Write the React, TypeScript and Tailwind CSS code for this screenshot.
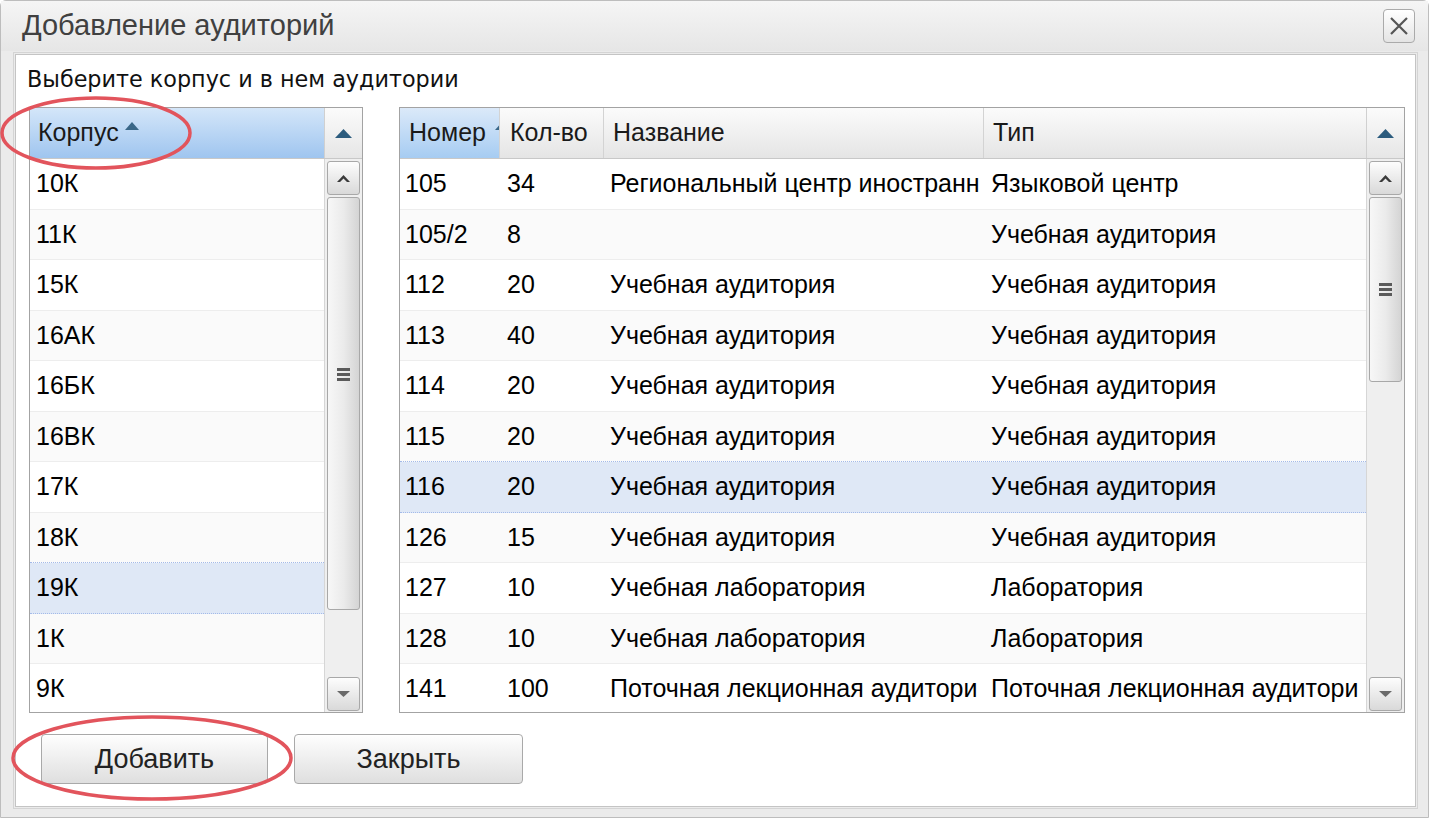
import React from 'react';

const buildings = ['10К', '11К', '15К', '16АК', '16БК', '16ВК', '17К', '18К', '19К', '1К', '9К'];

const rooms: [string, string, string, string][] = [
  ['105', '34', 'Региональный центр иностранн', 'Языковой центр'],
  ['105/2', '8', '', 'Учебная аудитория'],
  ['112', '20', 'Учебная аудитория', 'Учебная аудитория'],
  ['113', '40', 'Учебная аудитория', 'Учебная аудитория'],
  ['114', '20', 'Учебная аудитория', 'Учебная аудитория'],
  ['115', '20', 'Учебная аудитория', 'Учебная аудитория'],
  ['116', '20', 'Учебная аудитория', 'Учебная аудитория'],
  ['126', '15', 'Учебная аудитория', 'Учебная аудитория'],
  ['127', '10', 'Учебная лаборатория', 'Лаборатория'],
  ['128', '10', 'Учебная лаборатория', 'Лаборатория'],
  ['141', '100', 'Поточная лекционная аудитори', 'Поточная лекционная аудитори'],
];

const SELECTED_BUILDING = 8;
const SELECTED_ROOM = 6;

function rowClass(i: number, sel: number) {
  if (i === sel) return 'bg-[#dfe8f6] border-b border-dotted border-[#a3bae9]';
  const stripe = i % 2 === 1 ? 'bg-[#fafafa]' : 'bg-white';
  if (i === sel - 1) return `${stripe} border-b border-dotted border-[#a3bae9]`;
  return `${stripe} border-b border-[#ededed]`;
}

function SortArrow({ className }: { className: string }) {
  return (
    <svg width="14" height="8" viewBox="0 0 14 8" className={className}>
      <polygon points="0,8 7,0 14,8" fill="#3a6788" />
    </svg>
  );
}

function ScrollHeader() {
  return (
    <div className="w-[38px] h-full border-l border-[#d0d0d0] bg-linear-to-b from-[#fbfbfb] to-[#e6e6e6] flex items-center justify-center">
      <svg width="17" height="9" viewBox="0 0 17 9">
        <polygon points="0,9 8.5,0 17,9" fill="#2c5c7e" />
      </svg>
    </div>
  );
}

function ScrollBtn({ dir }: { dir: 'up' | 'down' }) {
  return (
    <div className="w-[33px] h-[34px] shrink-0 rounded-[3px] border border-[#a8a8a8] bg-linear-to-b from-[#fdfdfd] to-[#d9d9d9] flex items-center justify-center">
      <svg width="13" height="7" viewBox="0 0 13 7">
        {dir === 'up' ? (
          <polygon points="0,7 6.5,0 13,7 10,7 6.5,3.5 3,7" fill="#3a3a3a" />
        ) : (
          <polygon points="0,0 13,0 6.5,6" fill="#6a6a6a" />
        )}
      </svg>
    </div>
  );
}

function ScrollBar({ thumb, grip }: { thumb: string; grip: string }) {
  return (
    <div className="w-[38px] border-l border-[#d6d6d6] bg-[#efefef] flex flex-col items-center pt-[2px] pb-[1px]">
      <ScrollBtn dir="up" />
      <div
        className={`mt-[2px] w-[33px] shrink-0 rounded-[3px] border border-[#a8a8a8] bg-linear-to-r from-[#f7f7f7] via-[#ebebeb] to-[#d4d4d4] flex flex-col items-center ${thumb} ${grip}`}
      >
        <div className="flex flex-col gap-[2px]">
          <div className="w-[13px] h-[3px] bg-[#5a5a5a]" />
          <div className="w-[13px] h-[3px] bg-[#5a5a5a]" />
          <div className="w-[13px] h-[3px] bg-[#5a5a5a]" />
        </div>
      </div>
      <div className="flex-1" />
      <ScrollBtn dir="down" />
    </div>
  );
}

function BuildingGrid() {
  return (
    <div className="w-[334px] h-[606px] border border-[#a3a3a3] bg-white flex flex-col">
      <div className="h-[51px] shrink-0 flex border-b border-[#c8c8c8]">
        <div className="flex-1 bg-linear-to-b from-[#d4e6f9] to-[#9fc5ef] flex items-center pl-[8px] text-[25px] text-[#1a1a1a]">
          <span>Корпус</span>
          <SortArrow className="ml-[6px] -mt-[14px]" />
        </div>
        <ScrollHeader />
      </div>
      <div className="flex-1 flex min-h-0">
        <div className="flex-1 overflow-hidden">
          {buildings.map((b, i) => (
            <div key={b} className={`h-[50.5px] flex items-center pl-[6px] text-[25px] text-black ${rowClass(i, SELECTED_BUILDING)}`}>
              {b}
            </div>
          ))}
        </div>
        <ScrollBar thumb="h-[413px]" grip="pt-[170px]" />
      </div>
    </div>
  );
}

function RoomGrid() {
  const head = 'flex items-center overflow-hidden whitespace-nowrap border-r border-[#d3d3d3] text-[25px] text-[#1a1a1a]';
  const cell = 'flex items-center overflow-hidden whitespace-nowrap';
  return (
    <div className="w-[1006px] h-[606px] border border-[#a3a3a3] bg-white flex flex-col">
      <div className="h-[51px] shrink-0 flex border-b border-[#c8c8c8]">
        <div className="flex-1 grid grid-cols-[100px_104px_380px_1fr] bg-linear-to-b from-[#fbfbfb] to-[#e5e5e5]">
          <div className={`${head} pl-[9px] bg-linear-to-b from-[#dbe9f9] to-[#a6ccf2]`}>
            <span>Номер</span>
            <SortArrow className="ml-[9px] -mt-[14px] shrink-0" />
          </div>
          <div className={`${head} pl-[10px]`}>Кол-во</div>
          <div className={`${head} pl-[9px]`}>Название</div>
          <div className={`${head} pl-[9px] border-r-0`}>Тип</div>
        </div>
        <ScrollHeader />
      </div>
      <div className="flex-1 flex min-h-0">
        <div className="flex-1 overflow-hidden">
          {rooms.map((r, i) => (
            <div
              key={r[0]}
              className={`h-[50.5px] grid grid-cols-[100px_104px_380px_1fr] text-[25px] text-black ${rowClass(i, SELECTED_ROOM)}`}
            >
              <div className={`${cell} pl-[5px]`}>{r[0]}</div>
              <div className={`${cell} pl-[7px]`}>{r[1]}</div>
              <div className={`${cell} pl-[6px]`}>{r[2]}</div>
              <div className={`${cell} pl-[7px]`}>{r[3]}</div>
            </div>
          ))}
        </div>
        <ScrollBar thumb="h-[185px]" grip="justify-center" />
      </div>
    </div>
  );
}

function Button({ label, width }: { label: string; width: string }) {
  return (
    <button
      type="button"
      className={`h-[50px] ${width} rounded-[4px] border border-[#a9a9a9] bg-linear-to-b from-[#fefefe] to-[#dfdfdf] text-[27px] text-[#222] shadow-[inset_0_1px_0_#fff]`}
    >
      {label}
    </button>
  );
}

export default function App() {
  return (
    <div className="relative w-[1429px] h-[818px] bg-white font-['Liberation_Sans',Arial,sans-serif]">
      <div className="w-full h-full border border-[#bdbdbd] rounded-t-[6px] bg-[#ebebeb] flex flex-col">
        <div className="h-[50px] shrink-0 flex items-center justify-between pl-[21px] pr-[13px] bg-linear-to-b from-[#f5f5f5] to-[#e6e6e6]">
          <span className="text-[29px] text-[#404040]">Добавление аудиторий</span>
          <div className="w-[32px] h-[34px] rounded-[4px] border border-[#aaaaaa] bg-linear-to-b from-[#ffffff] to-[#e4e4e4] flex items-center justify-center">
            <svg width="20" height="20" viewBox="0 0 20 20">
              <path d="M2 2 L18 18 M18 2 L2 18" stroke="#555" strokeWidth="2.2" fill="none" />
            </svg>
          </div>
        </div>
        <div className="flex-1 ml-[12px] mr-[10px] mb-[8px] mt-[1px] border border-[#d4d4d4] p-[1px] flex flex-col">
          <div className="flex-1 border border-[#c4c4c4] bg-white flex flex-col pl-[13px] pr-[9px] pt-[11px]">
            <div className="h-[28px] -ml-[2px] flex items-center text-[22.3px] text-[#111] font-['DejaVu_Sans',sans-serif]">
              Выберите корпус и в нем аудитории
            </div>
            <div className="mt-[13px] flex gap-[36px]">
              <BuildingGrid />
              <RoomGrid />
            </div>
            <div className="mt-[21px] ml-[12px] flex gap-[26px]">
              <Button label="Добавить" width="w-[227px]" />
              <Button label="Закрыть" width="w-[229px]" />
            </div>
          </div>
        </div>
      </div>
      <svg className="absolute inset-0 pointer-events-none" width="1429" height="818">
        <ellipse cx="96" cy="133" rx="94" ry="35" fill="none" stroke="#e2545c" strokeWidth="3.5" />
        <ellipse cx="152" cy="758" rx="139" ry="41" fill="none" stroke="#e2545c" strokeWidth="3.5" />
      </svg>
    </div>
  );
}
